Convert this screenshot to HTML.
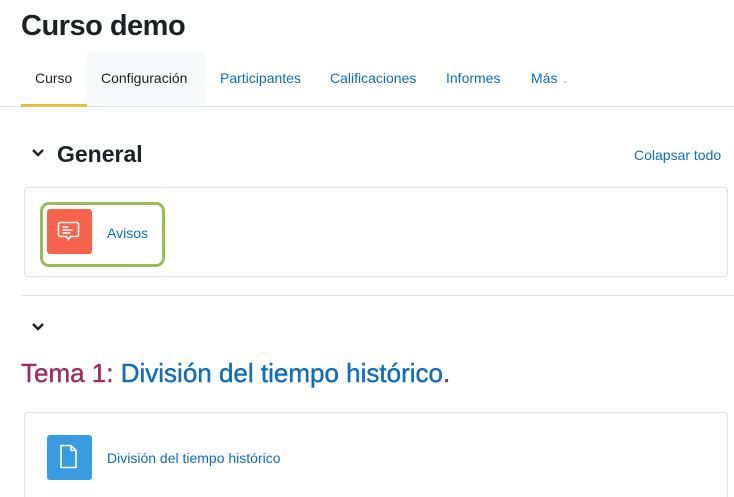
<!DOCTYPE html>
<html><head><meta charset="utf-8"><style>
html,body{margin:0;width:734px;height:497px;overflow:hidden;background:#fff;font-family:"Liberation Sans",sans-serif;position:relative}
.a{position:absolute;white-space:nowrap}
.tab{position:absolute;top:70px;font-size:14px;color:#0f6cbf}
</style></head><body>
<div class="a" style="left:21px;top:10px;font-size:29px;font-weight:bold;color:#1d2125;letter-spacing:-0.5px">Curso demo</div>
<div class="a" style="left:87px;top:52px;width:118px;height:54px;background:#f8f9fa"></div>
<div class="a" style="left:0;top:106px;width:734px;height:1px;background:#dee2e6"></div>
<div class="a" style="left:21px;top:104px;width:66px;height:3px;background:#e3c042"></div>
<div class="tab" style="left:35px;color:#1d2125">Curso</div>
<div class="tab" style="left:101px;color:#1d2125">Configuración</div>
<div class="tab" style="left:220px">Participantes</div>
<div class="tab" style="left:330px">Calificaciones</div>
<div class="tab" style="left:446px">Informes</div>
<div class="tab" style="left:531px">Más <span style="font-size:9px;color:#a8c4e4">⌄</span></div>
<svg class="a" style="left:31px;top:148px" width="14" height="10"><path d="M2 2l5 5 5-5" stroke="#1d2125" stroke-width="2.4" fill="none"/></svg>
<div class="a" style="left:57px;top:141px;font-size:23px;font-weight:bold;color:#1d2125">General</div>
<div class="a" style="left:634px;top:147px;font-size:14px;color:#0f6cbf">Colapsar todo</div>
<div class="a" style="left:24px;top:187px;width:702px;height:88px;border:1px solid #dee2e6;border-radius:4px"></div>
<div class="a" style="left:40px;top:202px;width:119px;height:59px;border:3px solid #9bbb59;border-radius:9px"></div>
<div class="a" style="left:47px;top:209px;width:45px;height:45px;background:#f7634d;border-radius:3px"></div>
<svg class="a" style="left:57px;top:221px" width="26" height="24"><path d="M3 1.5h17a1.5 1.5 0 0 1 1.5 1.5v11a1.5 1.5 0 0 1-1.5 1.5h-6.5l-2 3-2-3h-6.5a1.5 1.5 0 0 1-1.5-1.5v-11a1.5 1.5 0 0 1 1.5-1.5z" stroke="#fff" stroke-width="1.6" fill="none"/><path d="M5.5 6h6M5.5 9h10M5.5 12h8" stroke="#fff" stroke-width="1.5"/></svg>
<div class="a" style="left:107px;top:225px;font-size:14px;color:#0f6cbf">Avisos</div>
<div class="a" style="left:21px;top:295px;width:713px;height:1px;background:#dee2e6"></div>
<svg class="a" style="left:31px;top:322px" width="14" height="10"><path d="M2 2l5 5 5-5" stroke="#1d2125" stroke-width="2.4" fill="none"/></svg>
<div class="a" style="left:21px;top:358px;font-size:26px;color:#0f6cbf;-webkit-text-stroke:0.4px currentColor"><span style="color:#9b2d5f">Tema 1:</span> División del tiempo histórico<span style="color:#9b2d5f">.</span></div>
<div class="a" style="left:24px;top:412px;width:702px;height:100px;border:1px solid #dee2e6;border-radius:4px"></div>
<div class="a" style="left:47px;top:435px;width:45px;height:45px;background:#399be2;border-radius:3px"></div>
<svg class="a" style="left:59px;top:444px" width="20" height="26"><path d="M2 1.5h10l5 5v17h-15z" stroke="#fff" stroke-width="1.6" fill="none"/><path d="M12 1.5v5h5" stroke="#fff" stroke-width="1.4" fill="none"/></svg>
<div class="a" style="left:107px;top:450px;font-size:14px;color:#0f6cbf">División del tiempo histórico</div>
</body></html>
